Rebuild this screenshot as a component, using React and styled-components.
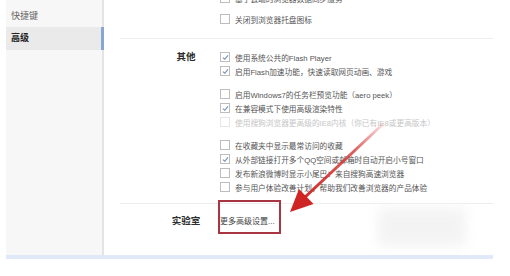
import React from 'react'
import styled, { createGlobalStyle } from 'styled-components'

const GlobalStyle = createGlobalStyle`
    html, body {
        margin: 0;
        padding: 0;
        background: #ffffff;
    }
    body {
        font-family: "Liberation Sans", "Noto Sans CJK SC", sans-serif;
    }
`

const Page = styled.div`
    position: relative;
    width: 510px;
    height: 276px;
    overflow: hidden;
    background: #ffffff;
`

const Window = styled.div`
    display: flex;
    margin-left: 6px;
    width: 487px;
    height: 255px;
    border-bottom: 4px solid #dfe9f7;
`

// Sidebar
const Sidebar = styled.div`
    width: 96px;
    padding-top: 5px;
    background: #f7f7f7;
    border-right: 2px solid #e4e4e4;
`

const SideItem = styled.div`
    position: relative;
    height: ${p => (p.active ? '23px' : '22px')};
    line-height: ${p => (p.active ? '23px' : '22px')};
    padding-left: 5px;
    font-size: 9px;
    color: ${p => (p.active ? '#222' : '#666')};
    font-weight: ${p => (p.active ? 700 : 400)};
    background: ${p => (p.active ? '#eaeaea' : 'transparent')};

    &::after {
        content: '';
        display: ${p => (p.active ? 'block' : 'none')};
        position: absolute;
        right: -2px;
        top: 0;
        width: 3px;
        height: 100%;
        background: #86a7d0;
    }
`

// Main
const Main = styled.div`
    flex: 1;
    overflow: hidden;
`

const Section = styled.div`
    display: grid;
    grid-template-columns: 116px 1fr;
    padding-top: ${p => p.top}px;
    padding-bottom: ${p => p.bottom}px;
    margin-top: ${p => p.shift || 0}px;
`

const Divider = styled.div`
    height: 1px;
    margin-left: 16px;
    background: #eeeeee;
`

const Label = styled.div`
    padding-left: 46px;
    width: 72px;
    text-align: center;
    font-size: 9.5px;
    font-weight: 700;
    color: #2e2e2e;
    height: 14px;
    line-height: 14px;
`

const Options = styled.div`
    display: flex;
    flex-direction: column;
    gap: 9px;
`

const Group = styled.div`
    display: flex;
    flex-direction: column;
    gap: ${p => p.gap || 0}px;
`

const Row = styled.div`
    display: flex;
    align-items: center;
    gap: 5px;
    height: 14px;
    font-size: 7.7px;
    white-space: nowrap;
    color: ${p => (p.disabled ? '#c6c6c6' : '#555555')};
`

const Box = styled.span`
    display: inline-flex;
    align-items: center;
    justify-content: center;
    width: 8px;
    height: 8px;
    border: 1px solid ${p => (p.disabled ? '#e6e6e6' : '#bdbdbd')};
    background: #fff;
    flex: none;
`

const LinkText = styled.div`
    font-size: 8px;
    color: #444;
    height: 16px;
    line-height: 16px;
`

// annotation overlays
const Frame = styled.div`
    position: absolute;
    left: 218px;
    top: 200px;
    width: 59px;
    height: 30px;
    border: 2px solid #a83541;
`

const Arrow = styled.svg`
    position: absolute;
    left: 0;
    top: 0;
`

const Smudge = styled.div`
    position: absolute;
    left: 378px;
    top: 208px;
    width: 88px;
    height: 38px;
    background: #efefef;
    filter: blur(6px);
    opacity: 0.7;
`

const Check = ({ checked, disabled }) => (
    <Box disabled={disabled}>
        {checked && (
            <svg width="7" height="7" viewBox="0 0 7 7">
                <path d="M1 3.6 L2.8 5.3 L6 1.4" fill="none" stroke="#6f8db5" strokeWidth="1.1" />
            </svg>
        )}
    </Box>
)

const Option = ({ checked, disabled, children }) => (
    <Row disabled={disabled}>
        <Check checked={checked} disabled={disabled} />
        <span>{children}</span>
    </Row>
)

const App = () => {
    return (
        <Page>
            <GlobalStyle />
            <Window>
                <Sidebar>
                    <SideItem>快捷键</SideItem>
                    <SideItem active>高级</SideItem>
                </Sidebar>
                <Main>
                    <Section top={0} bottom={12} shift={-9}>
                        <Label />
                        <Group gap={7}>
                            <Option>基于云端的浏览器数据同步服务</Option>
                            <Option>关闭到浏览器托盘图标</Option>
                        </Group>
                    </Section>
                    <Divider />

                    <Section top={11} bottom={9}>
                        <Label>其他</Label>
                        <Options>
                            <Group>
                                <Option checked>使用系统公共的Flash Player</Option>
                                <Option checked>启用Flash加速功能，快速读取网页动画、游戏</Option>
                            </Group>
                            <Group>
                                <Option>启用Windows7的任务栏预览功能（aero peek）</Option>
                                <Option checked>在兼容模式下使用高级渲染特性</Option>
                                <Option disabled>使用搜狗浏览器更高级的IE8内核（你已有IE8或更高版本）</Option>
                            </Group>
                            <Group>
                                <Option>在收藏夹中显示最常访问的收藏</Option>
                                <Option checked>从外部链接打开多个QQ空间或邮箱时自动开启小号窗口</Option>
                                <Option>发布新浪微博时显示小尾巴：来自搜狗高速浏览器</Option>
                                <Option>参与用户体验改善计划，帮助我们改善浏览器的产品体验</Option>
                            </Group>
                        </Options>
                    </Section>
                    <Divider />

                    <Section top={10} bottom={0}>
                        <Label>实验室</Label>
                        <LinkText>更多高级设置...</LinkText>
                    </Section>
                </Main>
            </Window>

            <Smudge />
            <Frame />
            <Arrow width="510" height="276" viewBox="0 0 510 276">
                <defs>
                    <linearGradient id="redline" x1="383" y1="124" x2="300" y2="202" gradientUnits="userSpaceOnUse">
                        <stop offset="0" stopColor="#d84040" stopOpacity="0.15" />
                        <stop offset="0.35" stopColor="#d43535" stopOpacity="0.8" />
                        <stop offset="1" stopColor="#cf2424" />
                    </linearGradient>
                </defs>
                <path d="M383 124 L303 199" stroke="url(#redline)" strokeWidth="3" strokeLinecap="round" />
                <path d="M290 212 L313.5 204 L299 189 Z" fill="#cf2424" />
            </Arrow>
        </Page>
    )
}

export default App
